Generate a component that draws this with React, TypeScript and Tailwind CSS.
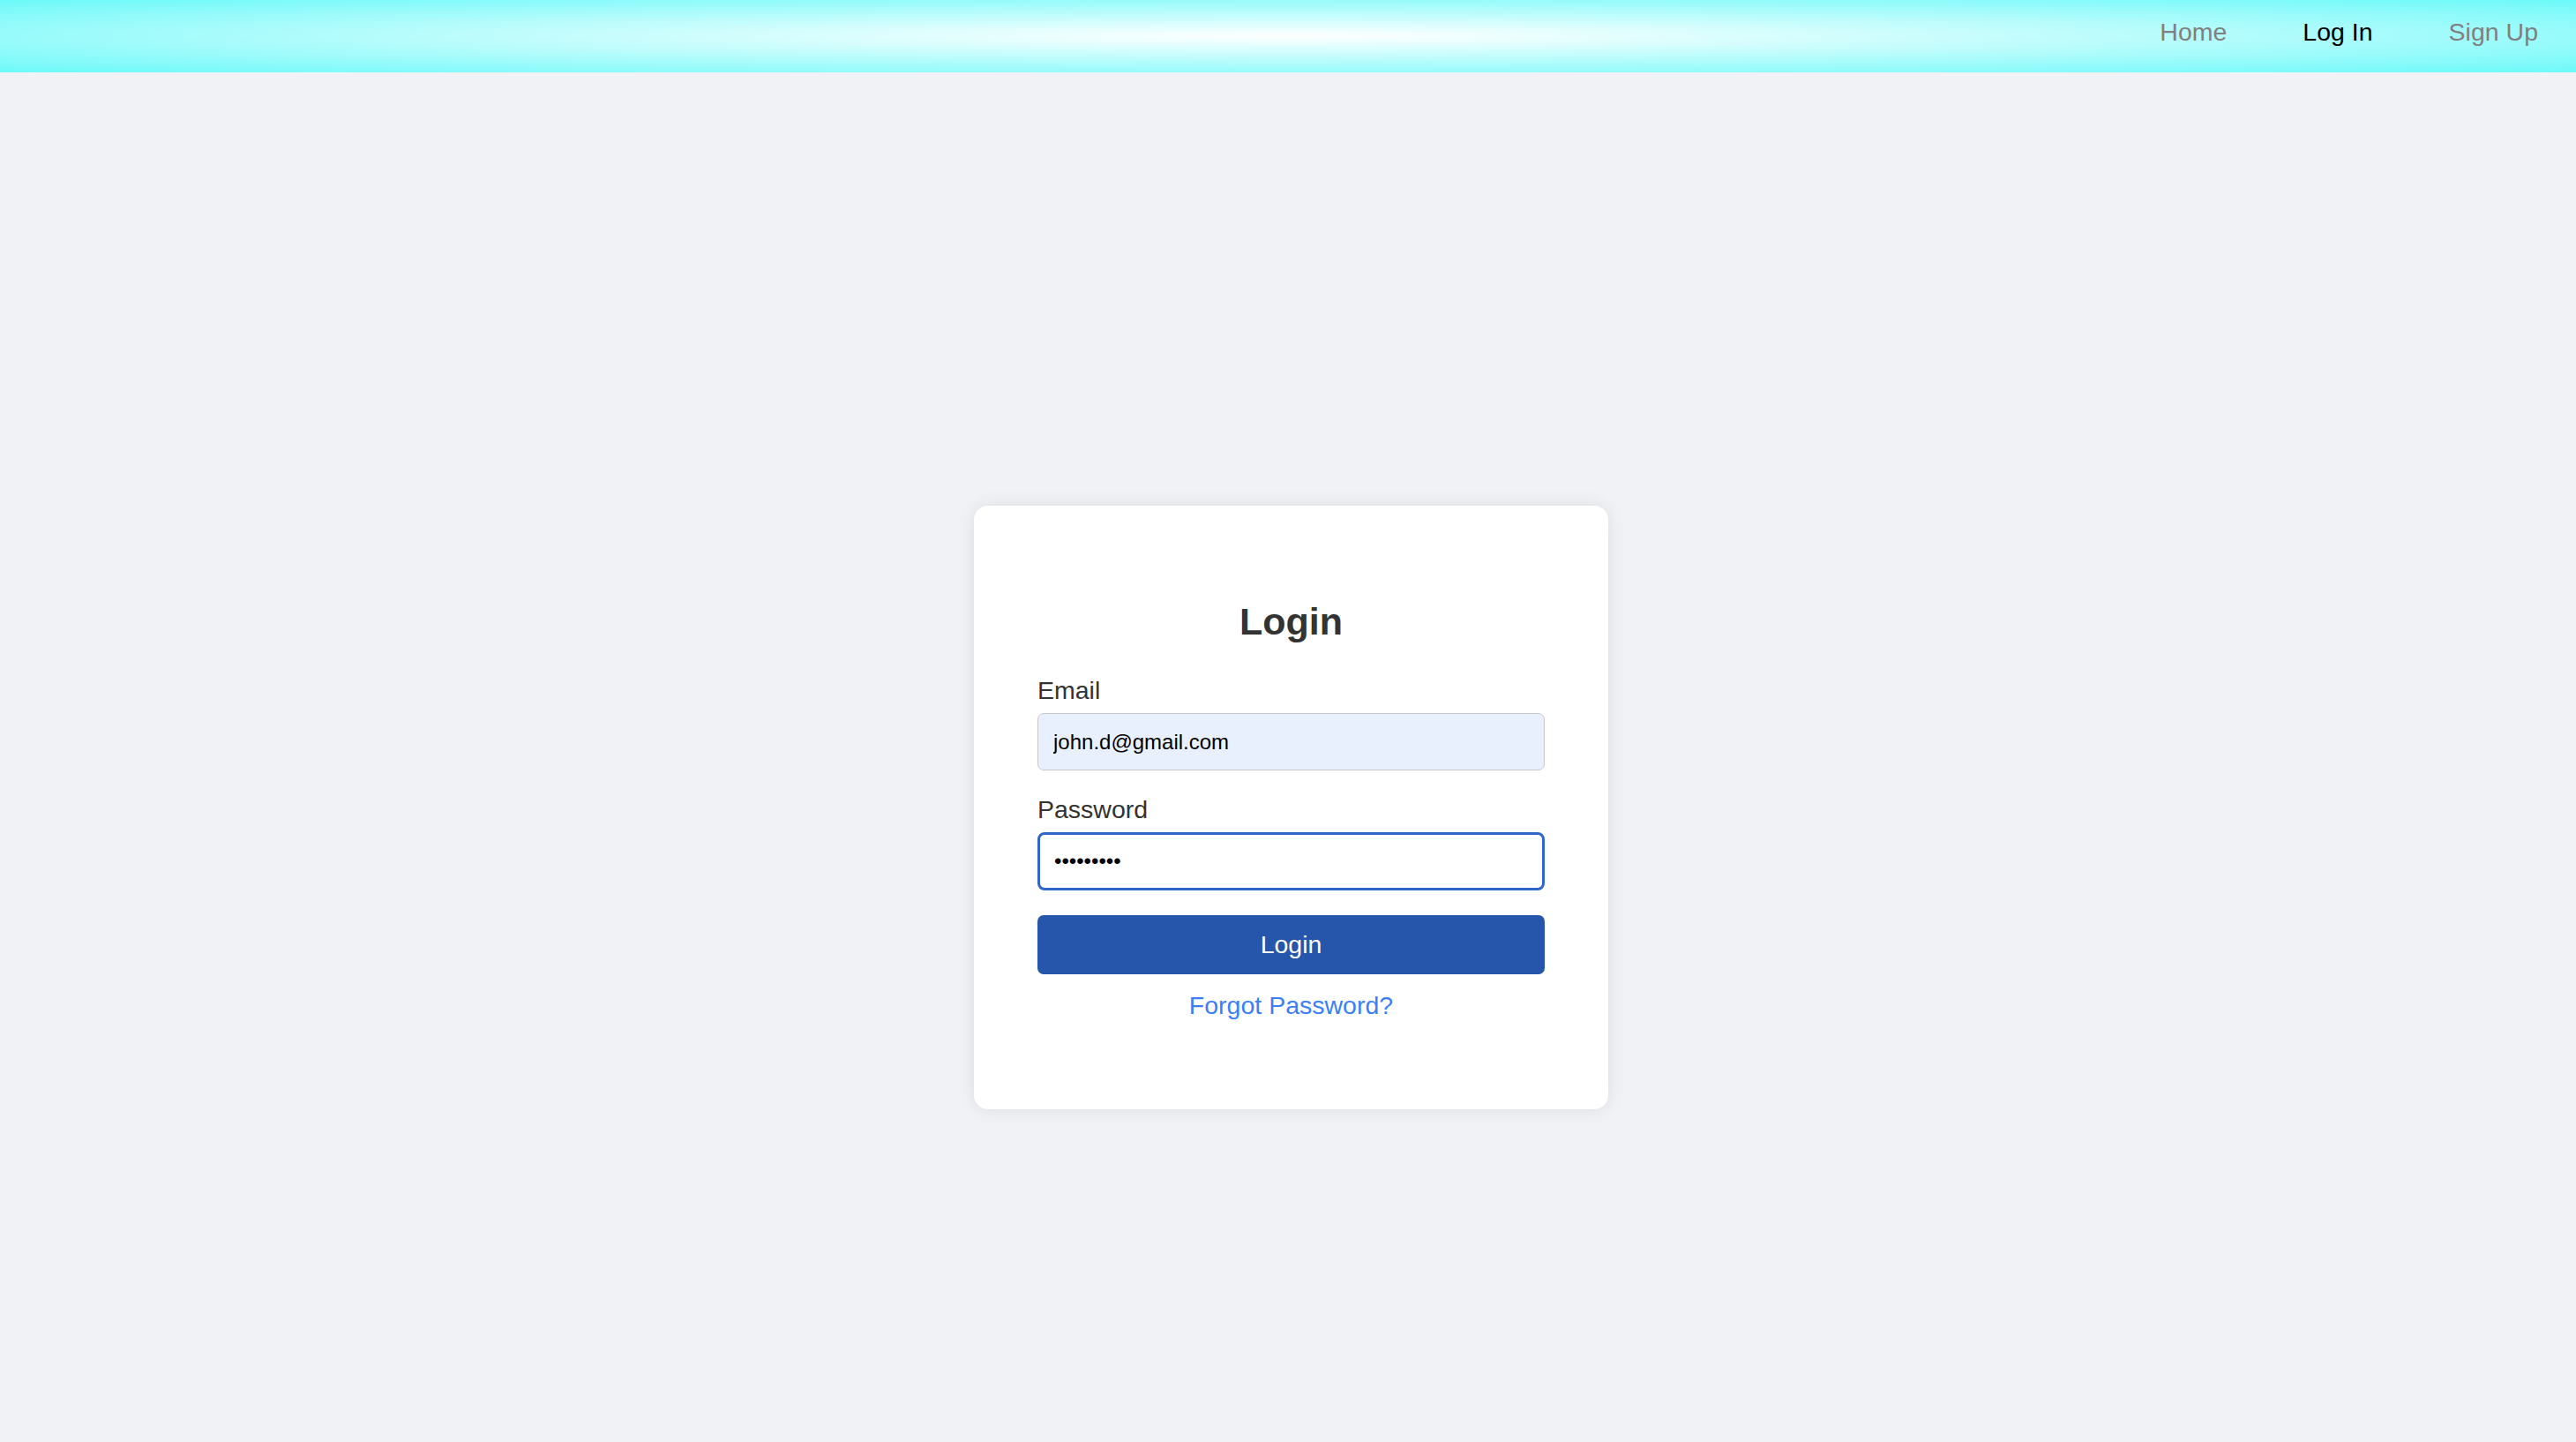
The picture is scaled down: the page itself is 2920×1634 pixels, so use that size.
import React, { useState } from 'react';

const navLinks = [
  { label: 'Home', active: false },
  { label: 'Log In', active: true },
  { label: 'Sign Up', active: false },
];

export default function App() {
  const [email, setEmail] = useState('john.d@gmail.com');
  const [password, setPassword] = useState('123456789');

  return (
    <div className="min-h-screen bg-[#f0f2f5] font-['Liberation_Sans',Arial,sans-serif]">
      {/* top bar */}
      <header className="h-[82px] flex justify-end items-start pt-[20px] bg-[radial-gradient(ellipse_at_center,#ffffff_0%,#6cf9f9_100%)]">
        {navLinks.map(link => (
          <a
            key={link.label}
            href="#"
            className={`px-[43px] text-[28.5px] leading-[33px] ${link.active ? 'text-black' : 'text-[#808080]'}`}
          >
            {link.label}
          </a>
        ))}
      </header>

      <main className="flex justify-center pt-[491px] pl-[7px]">
        <div className="w-[719px] bg-white rounded-[16px] shadow-[0_0_20px_rgba(0,0,0,0.09)] px-[72px] pt-[106px] pb-[101px]">
          <h1 className="text-center text-[43px] leading-[50px] font-bold text-[#333333]">Login</h1>

          <label className="block mt-[37px] text-[28.5px] leading-[33px] text-[#333333]">Email</label>
          <input
            type="email"
            value={email}
            onChange={e => setEmail(e.target.value)}
            className="mt-[9px] w-full h-[65px] px-[17px] text-[24px] text-black bg-[#e8f0fe] border border-[#c8c8cc] rounded-[7px] outline-none"
          />

          <label className="block mt-[28px] text-[28.5px] leading-[33px] text-[#333333]">Password</label>
          <input
            type="password"
            value={password}
            onChange={e => setPassword(e.target.value)}
            className="mt-[9px] w-full h-[66px] px-[16px] text-[24px] text-black bg-white border-[3px] border-[#2f66cc] rounded-[8px] outline-none"
          />

          <button className="mt-[28px] w-full h-[67px] bg-[#2556ab] text-white text-[28.5px] rounded-[7px]">
            Login
          </button>

          <div className="mt-[19px] text-center">
            <a href="#" className="text-[28.5px] leading-[33px] text-[#3a7ff6]">Forgot Password?</a>
          </div>
        </div>
      </main>
    </div>
  );
}
